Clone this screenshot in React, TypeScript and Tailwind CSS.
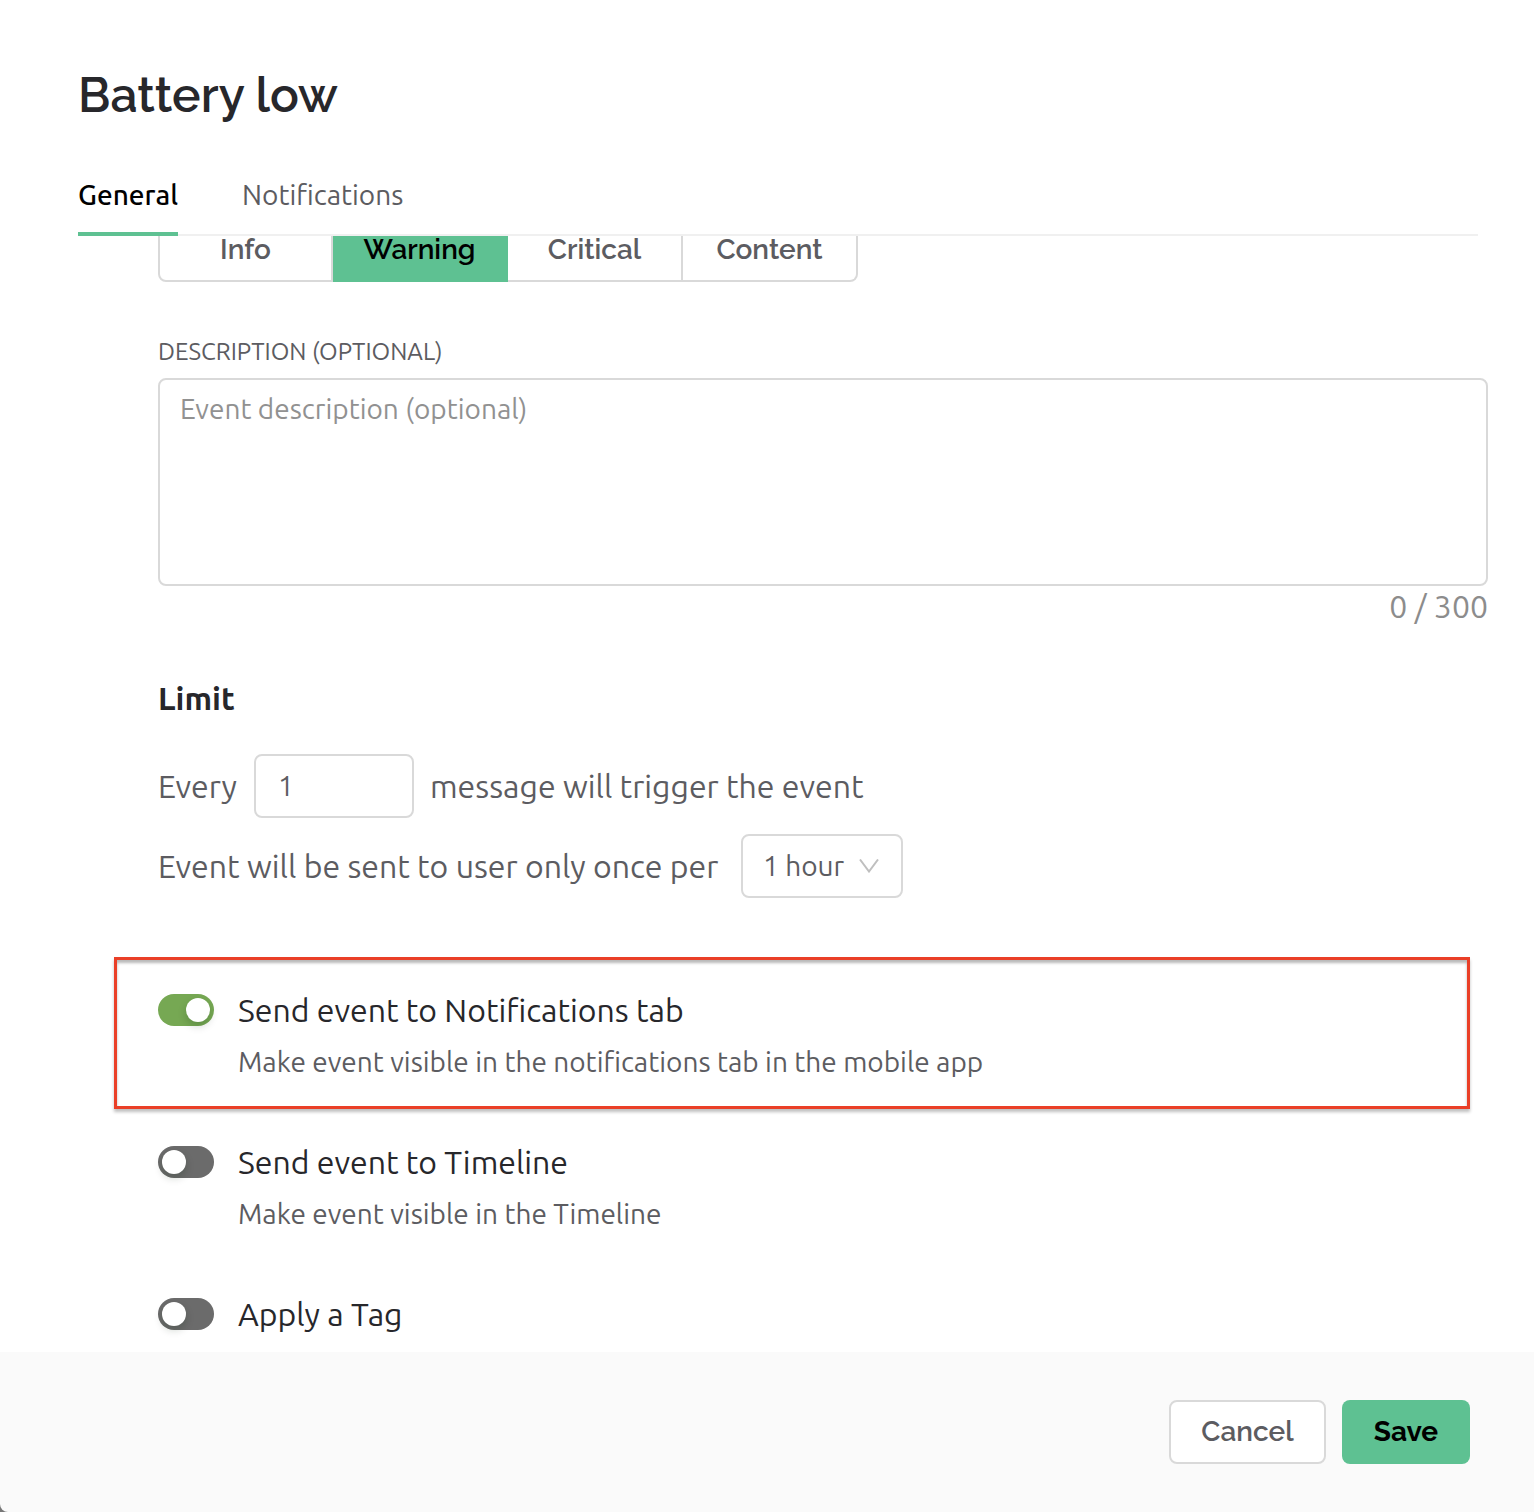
import { useState } from "react";

const severities = ["Info", "Warning", "Critical", "Content"];

const switches = [
  {
    id: "notifications-tab",
    title: "Send event to Notifications tab",
    detail: "Make event visible in the notifications tab in the mobile app",
    on: true,
    outlined: true,
  },
  {
    id: "timeline",
    title: "Send event to Timeline",
    detail: "Make event visible in the Timeline",
    on: false,
    outlined: false,
  },
  { id: "tag", title: "Apply a Tag", detail: "", on: false, outlined: false },
];

function SwitchRow({ id, title, detail, on, outlined }: (typeof switches)[number]) {
  const [checked, setChecked] = useState(on);
  return (
    <div
      className={
        outlined
          ? "flex gap-6 border-3 border-[#ea3f27] pt-[34px] pl-[41px] pb-6 shadow-[0_3px_3px_rgba(0,0,0,0.25),inset_0_3px_3px_rgba(0,0,0,0.28)]"
          : "flex gap-6 border-3 border-transparent pt-[34px] pl-[41px] pb-6 last:pb-[19px]"
      }
    >
      <input
        id={id}
        type="checkbox"
        role="switch"
        checked={checked}
        onChange={(e) => setChecked(e.target.checked)}
        className="h-8 w-14 shrink-0 cursor-pointer appearance-none rounded-full bg-[#6b6b6b] p-1 before:block before:size-6 before:rounded-full before:bg-white before:shadow-[0_4px_8px_rgba(0,35,11,0.2)] checked:bg-[#76a853] checked:before:translate-x-6"
      />
      <div className="flex flex-col gap-4">
        <label htmlFor={id} className="text-[32px] leading-8 text-[#27272b]">
          {title}
        </label>
        {detail && <p className="text-[28px] leading-10 text-[#5c5c61]">{detail}</p>}
      </div>
    </div>
  );
}

export default function App() {
  const [severity, setSeverity] = useState("Warning");
  const [description, setDescription] = useState("");
  return (
    <div className="flex min-h-screen flex-col bg-white font-['Ubuntu','Noto_Sans',sans-serif] text-[#5c5c61]">
      <header className="pr-14 pl-[78px] pt-16">
        <h1 className="font-['Raleway','Noto_Sans',sans-serif] text-[48px] leading-[62px] font-semibold text-[#27272b]">
          Battery low
        </h1>
        <nav className="mt-[30px] flex gap-16 border-b-2 border-[#f0f0f0] text-[28px] leading-8">
          <a href="#general" className="-mb-0.5 border-b-4 border-[#5ec192] pt-[23px] pb-[21px] font-medium text-black">
            General
          </a>
          <a href="#notifications" className="pt-[23px]">
            Notifications
          </a>
        </nav>
      </header>

      <main className="grow">
        <div className="pr-[46px] pl-[158px]">
          <div className="overflow-hidden">
            <div role="group" aria-label="Severity" className="-mt-[18px] grid w-[700px] grid-cols-4 font-['Raleway','Noto_Sans',sans-serif]">
              {severities.map((s) => (
                <button
                  key={s}
                  type="button"
                  aria-pressed={s === severity}
                  onClick={() => setSeverity(s)}
                  className="h-16 border-y-2 border-r-2 border-[#d9d9d9] text-[28px] leading-8 font-semibold first:rounded-l-lg first:border-l-2 last:rounded-r-lg aria-pressed:border-[#5ec192] aria-pressed:bg-[#5ec192] aria-pressed:text-black"
                >
                  {s}
                </button>
              ))}
            </div>
          </div>

          <label htmlFor="description" className="mt-[54px] block text-[24px] leading-8">
            DESCRIPTION (OPTIONAL)
          </label>
          <textarea
            id="description"
            maxLength={300}
            placeholder="Event description (optional)"
            value={description}
            onChange={(e) => setDescription(e.target.value)}
            className="mt-2.5 block h-52 w-full resize-none rounded-lg border-2 border-[#d9d9d9] px-5 py-2 text-[28px] leading-[42px] placeholder:text-[#919191]"
          />
          <p className="text-right text-[32px] leading-10 text-[#8c8c8c]">{description.length} / 300</p>

          <h2 className="mt-[52px] text-[32px] leading-10 font-semibold text-[#27272b]">Limit</h2>
          <div className="mt-9 flex items-center gap-4 text-[32px]">
            <label htmlFor="every" className="min-w-20">Every</label>
            <input
              id="every"
              type="text"
              inputMode="numeric"
              defaultValue="1"
              className="h-16 w-40 rounded-lg border-2 border-[#d9d9d9] px-[22px] pb-0.5 text-[28px]"
            />
            <span>message will trigger the event</span>
          </div>
          <div className="mt-4 flex items-center gap-4 text-[32px]">
            <label htmlFor="period" className="min-w-[567px]">Event will be sent to user only once per</label>
            <div className="relative">
              <select
                id="period"
                defaultValue="1 hour"
                className="block h-16 w-[162px] appearance-none rounded-lg border-2 border-[#d9d9d9] bg-white pl-5 text-[28px]"
              >
                <option>1 hour</option>
                <option>1 day</option>
              </select>
              <svg
                viewBox="0 0 20 14"
                className="pointer-events-none absolute top-[25px] right-6 h-3.5 w-5"
                fill="none"
                stroke="#bfbfbf"
                strokeWidth="2"
                aria-hidden="true"
              >
                <path d="M1 0.5 10 12.5 19 0.5" />
              </svg>
            </div>
          </div>
        </div>

        <div className="mt-[59px] mr-16 ml-[114px]">
          {switches.map((s) => (
            <SwitchRow key={s.id} {...s} />
          ))}
        </div>
      </main>

      <footer className="bg-[#777777]">
        <div className="flex justify-end gap-4 rounded-bl-lg bg-[#fafafa] px-16 py-12 font-['Raleway','Noto_Sans',sans-serif] text-[28px]">
          <button type="button" className="h-16 w-[157px] rounded-lg border-2 border-[#d9d9d9] bg-white font-semibold">
            Cancel
          </button>
          <button type="button" className="h-16 w-32 rounded-lg bg-[#5ec192] font-bold text-black">
            Save
          </button>
        </div>
      </footer>
    </div>
  );
}
